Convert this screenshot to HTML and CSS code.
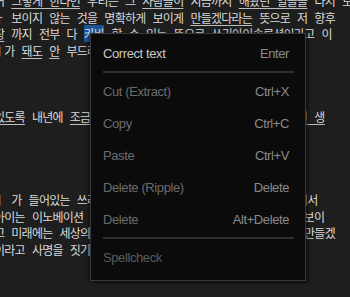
FILE: index.html
```html
<!DOCTYPE html>
<html lang="ko">
<head>
<meta charset="utf-8">
<link rel="stylesheet" href="styles.css">
</head>
<body>
<div class="doc">
  <p class="ln">어 <u>그렇게 한다면</u> 우리는 그 <u>사람들이</u> 지금까지 <u>해왔던 일들을</u> 다시 보게</p>
  <p class="ln">ㅏ 보이지 않는 것을 명확하게 보이게 <u>만들겠다라는</u> 뜻으로 저 향후</p>
  <p class="ln"><u>장</u> 까지 전부 다 <span class="sel">카바</span> 할 수 있는 뜻으로 쓰리아이솔루션이라고 이</p>
  <p class="ln">ㅣ가 <u>돼도</u> <u>안</u> 부드러운 느낌으로 다가갈 수</p>
  <p class="ln"></p>
  <p class="ln"></p>
  <p class="ln"></p>
  <p class="ln"><u>있도록</u> 내년에 <u>조금</u> 더 열심히 노력해서 고객분들께 나은 <u>현실 생</u></p>
  <p class="ln"></p>
  <p class="ln"></p>
  <p class="ln"></p>
  <p class="ln"></p>
  <p class="ln">ㅣ 가 들어있는 쓰리아이 솔루션의 이름에는 세가지 뜻이 있어서</p>
  <p class="ln">아이는 이노베이션 그리고 인사이트와 그리고 인터랙션이라는 보이</p>
  <p class="ln">고 미래에는 세상의 모든 것들을 새롭게 바라보실 수 있도록 만들겠</p>
  <p class="ln">이라고 사명을 짓기로 했습니다</p>
</div>

<div class="menu">
  <div class="item on"><span>Correct text</span><span class="key">Enter</span></div>
  <div class="sep"></div>
  <div class="item"><span>Cut (Extract)</span><span class="key">Ctrl+X</span></div>
  <div class="item"><span>Copy</span><span class="key">Ctrl+C</span></div>
  <div class="item"><span>Paste</span><span class="key">Ctrl+V</span></div>
  <div class="item"><span>Delete (Ripple)</span><span class="key">Delete</span></div>
  <div class="item"><span>Delete</span><span class="key">Alt+Delete</span></div>
  <div class="sep"></div>
  <div class="item dim"><span>Spellcheck</span></div>
</div>
</body>
</html>
```

FILE: styles.css
```css
html, body {
  margin: 0;
  padding: 0;
  background: #1e1e1e;
  width: 350px;
  height: 297px;
  overflow: hidden;
}

.doc {
  margin-top: -7px;
  margin-left: -6px;
  font-family: "Noto Sans CJK KR", "Noto Sans", sans-serif;
  font-size: 12px;
  letter-spacing: -0.75px;
  word-spacing: 4.4px;
  color: #dadada;
}

.ln {
  margin: 0;
  height: 16.6px;
  line-height: 16.6px;
  white-space: nowrap;
}

.ln u {
  text-decoration: underline;
  text-decoration-color: #bdbdbd;
  text-underline-offset: 2px;
}

.sel {
  background: #1b5493;
  color: #cfe4ff;
}

.menu {
  position: absolute;
  left: 90px;
  top: 33px;
  width: 214px;
  height: 243px;
  box-sizing: content-box;
  padding: 3px 0 0 0;
  background: #0b0b0b;
  border: 1px solid #3a3a3a;
  box-shadow: -2px 0 3px rgba(0,0,0,0.35), 2px 2px 3px rgba(0,0,0,0.5);
  font-family: "Liberation Sans", Arial, sans-serif;
  font-size: 13px;
  letter-spacing: -0.4px;
}

.item {
  display: flex;
  justify-content: space-between;
  align-items: center;
  height: 32px;
  padding: 0 16px 0 12px;
  color: #6b6b6b;
}

.item .key {
  color: #8a8a8a;
}

.item.on {
  color: #c8c8c8;
}

.item.on .key {
  color: #8c8c8c;
}

.item.dim {
  color: #5c5c5c;
}

.sep {
  height: 2px;
  margin: 2px 11px 2px 12px;
  background: #2f2f2f;
}
```
